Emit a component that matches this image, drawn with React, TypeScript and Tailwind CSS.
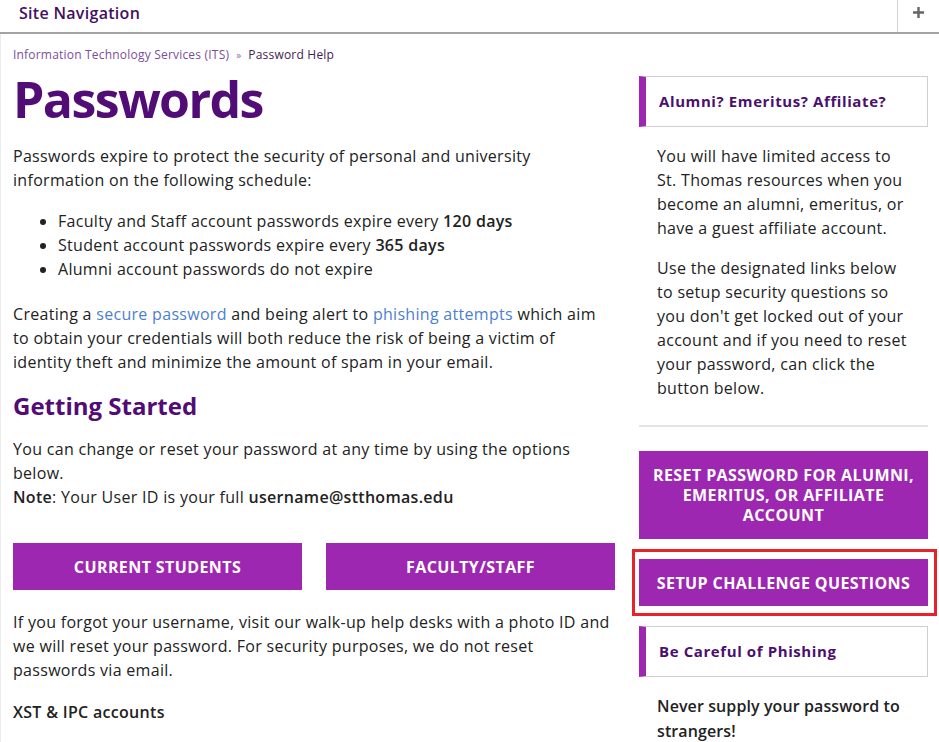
const font = { fontFamily: '"Open Sans", "Liberation Sans", sans-serif' };

function PurpleButton({ children, className = "" }: { children: React.ReactNode; className?: string }) {
  return (
    <a
      href="#"
      className={
        "flex items-center justify-center bg-[#9d27b1] text-white font-bold uppercase text-[16px] leading-5 tracking-[0.4px] text-center " +
        className
      }
    >
      {children}
    </a>
  );
}

function SideHeading({ children }: { children: React.ReactNode }) {
  return (
    <div className="flex border border-[#cfcfcf] border-l-[7px] border-l-[#9d27b1] h-[51px] items-center pl-[13px]">
      <h3 className="text-[15px] font-bold tracking-[0.6px] text-[#4b0f6e]">{children}</h3>
    </div>
  );
}

export default function App() {
  return (
    <div style={font} className="w-[939px] h-[742px] overflow-hidden bg-white text-[#222] tracking-[0.3px]">
      <header className="flex h-[34px] border-b-2 border-[#a3a3a3]">
        <div className="flex-1 flex items-center pl-[19px] pb-[7px] text-[16px] font-semibold text-[#43105f] tracking-[0.3px]">
          Site Navigation
        </div>
        <button className="w-[42px] border-l border-[#d4d4d4] flex items-center justify-center pb-[7px] text-[#666]">
          <svg width="11" height="11" viewBox="0 0 11 11">
            <path d="M5.5 0v11M0 5.5h11" stroke="currentColor" strokeWidth="2.4" />
          </svg>
        </button>
      </header>

      <div className="flex border-l border-[#ededed] h-full pl-[12px] pr-[11px]">
        <main className="w-[602px]">
          <nav className="mt-[13px] text-[12px] leading-4 flex items-center gap-[7px] tracking-[0.2px]">
            <a href="#" className="text-[#7a4f9a]">Information Technology Services (ITS)</a>
            <span className="text-[#8a6fa0] text-[10px]">»</span>
            <span className="text-[#3f2255]">Password Help</span>
          </nav>

          <h1 className="mt-[10px] text-[50px] leading-[52px] font-bold text-[#510c76] tracking-[-1.6px]">Passwords</h1>

          <p className="mt-[19px] text-[16px] leading-6">
            Passwords expire to protect the security of personal and university information on the following schedule:
          </p>

          <ul className="mt-[17px] list-disc pl-[45px] text-[16px] leading-6">
            <li>
              Faculty and Staff account passwords expire every <b className="font-semibold">120 days</b>
            </li>
            <li>
              Student account passwords expire every <b className="font-semibold">365 days</b>
            </li>
            <li>Alumni account passwords do not expire</li>
          </ul>

          <p className="mt-[21px] text-[16px] leading-6">
            Creating a <a href="#" className="text-[#4c7fcf]">secure password</a> and being alert to{" "}
            <a href="#" className="text-[#4c7fcf]">phishing attempts</a> which aim to obtain your credentials will both
            reduce the risk of being a victim of identity theft and minimize the amount of spam in your email.
          </p>

          <h2 className="mt-[16px] text-[24px] leading-8 font-bold text-[#510c76] tracking-normal">Getting Started</h2>

          <p className="mt-[15px] text-[16px] leading-6">
            You can change or reset your password at any time by using the options below.
            <br />
            <b className="font-semibold">Note</b>: Your User ID is your full{" "}
            <b className="font-semibold">username@stthomas.edu</b>
          </p>

          <div className="mt-[34px] grid grid-cols-2 gap-6">
            <PurpleButton className="h-[47px]">Current Students</PurpleButton>
            <PurpleButton className="h-[47px]">Faculty/Staff</PurpleButton>
          </div>

          <p className="mt-[20px] text-[16px] leading-6">
            If you forgot your username, visit our walk-up help desks with a photo ID and we will reset your password.
            For security purposes, we do not reset passwords via email.
          </p>

          <p className="mt-[18px] text-[16px] leading-6 font-semibold">XST &amp; IPC accounts</p>
        </main>

        <aside className="ml-[24px] w-[289px]">
          <div className="mt-[42px]">
            <SideHeading>Alumni? Emeritus? Affiliate?</SideHeading>
          </div>
          <div className="px-[18px] pt-[17px] pb-[25px] text-[16px] leading-6 border-b-2 border-[#e4e4e4]">
            <p>
              You will have limited access to St. Thomas resources when you become an alumni, emeritus, or have a guest
              affiliate account.
            </p>
            <p className="mt-4">
              Use the designated links below to setup security questions so you don't get locked out of your account and
              if you need to reset your password, can click the button below.
            </p>
          </div>

          <PurpleButton className="mt-[24px] h-[88px] px-[14px]">
            Reset Password for Alumni, Emeritus, or Affiliate Account
          </PurpleButton>

          <div className="mt-[10px] -ml-[7px] -mr-[9px] border-[3px] border-[#e8212b] pt-[7px] pb-[7px] pl-[4px] pr-[6px]">
            <PurpleButton className="h-[47px]">Setup Challenge Questions</PurpleButton>
          </div>

          <div className="mt-[10px]">
            <SideHeading>Be Careful of Phishing</SideHeading>
          </div>
          <p className="px-[18px] pt-[17px] text-[16px] leading-[25px] font-semibold tracking-[0.1px]">
            Never supply your password to strangers!
          </p>
        </aside>
      </div>
    </div>
  );
}
